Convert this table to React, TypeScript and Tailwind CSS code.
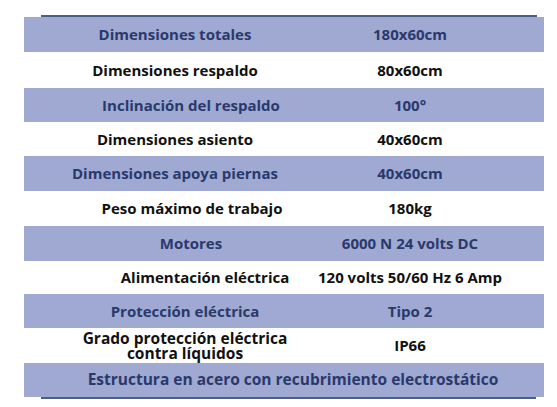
import React from "react";

type Row = {
  label: React.ReactNode;
  value?: string;
  shaded: boolean;
  h: string;
  lpad?: string;
  full?: boolean;
};

const rows: Row[] = [
  { label: "Dimensiones totales", value: "180x60cm", shaded: true, h: "h-[35px]" },
  { label: "Dimensiones respaldo", value: "80x60cm", shaded: false, h: "h-[36px]" },
  { label: "Inclinación del respaldo", value: "100°", shaded: true, h: "h-[34px]", lpad: "pl-[32px]" },
  { label: "Dimensiones asiento", value: "40x60cm", shaded: false, h: "h-[34px]" },
  { label: "Dimensiones apoya piernas", value: "40x60cm", shaded: true, h: "h-[35px]" },
  { label: "Peso máximo de trabajo", value: "180kg", shaded: false, h: "h-[35px]", lpad: "pl-[34px]" },
  { label: "Motores", value: "6000 N 24 volts DC", shaded: true, h: "h-[35px]", lpad: "pl-[32px]" },
  { label: "Alimentación eléctrica", value: "120 volts 50/60 Hz 6 Amp", shaded: false, h: "h-[33px]", lpad: "pl-[60px]" },
  { label: "Protección eléctrica", value: "Tipo 2", shaded: true, h: "h-[34px]", lpad: "pl-[20px]" },
  {
    label: (
      <span className="flex flex-col items-center leading-[15px] text-[15.5px]">
        <span>Grado protección eléctrica</span>
        <span>contra líquidos</span>
      </span>
    ),
    value: "IP66",
    shaded: false,
    h: "h-[35px]",
    lpad: "pl-[20px]",
  },
  {
    label: "Estructura en acero con recubrimiento electrostático",
    shaded: true,
    h: "h-[34px]",
    full: true,
  },
];

export default function App() {
  return (
    <div
      className="w-[557px] h-[407px] bg-white pt-[15px]"
      style={{ fontFamily: "'Open Sans', 'Noto Sans', sans-serif" }}
    >
      <div className="ml-[41px] w-[496px] h-[2px] bg-[#4b5e88]" />
      <div className="ml-[24px] w-[520px] flex flex-col text-[15px] font-bold">
        {rows.map((r, i) => (
          <div
            key={i}
            className={`${r.h} flex items-center ${
              r.shaded ? "bg-[#9fa9d2] text-[#2a396c]" : "bg-white text-[#111111]"
            }`}
          >
            {r.full ? (
              <div className="w-full flex justify-center whitespace-nowrap pl-[18px] text-[15.5px]">{r.label}</div>
            ) : (
              <>
                <div className={`w-[302px] flex justify-center whitespace-nowrap ${r.lpad ?? ""}`}>
                  {r.label}
                </div>
                <div className="w-[168px] flex justify-center whitespace-nowrap">{r.value}</div>
              </>
            )}
          </div>
        ))}
      </div>
      <div className="ml-[41px] w-[495px] h-[2px] bg-[#4b5e88]" />
    </div>
  );
}
